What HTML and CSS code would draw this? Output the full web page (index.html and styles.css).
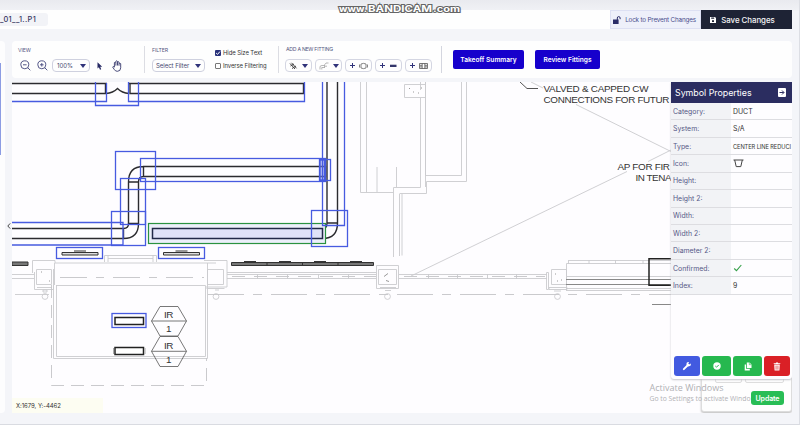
FILE: index.html
```
<!DOCTYPE html>
<html lang="en">
<head>
<meta charset="utf-8">
<title>Takeoff</title>
<link rel="stylesheet" href="styles.css">
</head>
<body>
<div class="app">
  <svg class="recorder" width="130" height="16" viewBox="335 0 130 16">
    <text x="339" y="11.500" textLength="28" lengthAdjust="spacingAndGlyphs" font-size="8.500">www.</text>
    <text x="368" y="11.500" textLength="64" lengthAdjust="spacingAndGlyphs" font-size="9.500">BANDICAM</text>
    <text x="433" y="11.500" textLength="27" lengthAdjust="spacingAndGlyphs" font-size="8.500">.com</text>
  </svg>
  <header class="topbar">
    <div class="file-tab">_01__1..P1</div>
    <button class="lock">
      <svg width="8" height="8" viewBox="0 0 8 8"><path d="M4.300 4V2a1.400 1.400 0 0 1 2.800 0v1.200" fill="none" stroke="#2b2d68"/><path d="M0 3.500h5.600V8H0z" fill="#2b2d68"/></svg>
      <span>Lock to Prevent Changes</span>
    </button>
    <button class="save">
      <svg width="6" height="6" viewBox="0 0 6 6"><path d="M0 0h5l1 1v5H0z" fill="#fff"/><path d="M1.200.5h3v1.300h-3zM2 3.300h2v1.600H2z" fill="#1e2335"/></svg>
      <span>Save Changes</span>
    </button>
  </header>
  <div class="workspace">
    <aside class="sidebar"><div class="scroll"></div></aside>
    <div class="gutter"><svg width="4" height="6" viewBox="0 0 4 6"><path d="M3.200.4.800 3l2.400 2.600" fill="none" stroke="#333" stroke-width=".9"/></svg></div>
    <main class="main">
      <div class="toolbar">
        <section class="group view">
          <h2>VIEW</h2>
          <div class="row">
            <svg class="zoom-out" width="11" height="11" viewBox="0 0 11 11"><g fill="none" stroke="#41447a" stroke-width=".9"><circle cx="4.800" cy="4.800" r="4"/><path d="M7.700 7.700 10.300 10.300M3 4.800h3.600"/></g></svg>
            <svg class="zoom-in" width="11" height="11" viewBox="0 0 11 11"><g fill="none" stroke="#41447a" stroke-width=".9"><circle cx="4.800" cy="4.800" r="4"/><path d="M7.700 7.700 10.300 10.300M3 4.800h3.600M4.800 3v3.600"/></g></svg>
            <div class="select zoom-level"><span>100%</span><i></i></div>
            <svg class="pointer" width="6" height="8" viewBox="0 0 6 8"><path d="M.5.3v6.200l1.400-1.200L3 7.700l1.200-.5-1-2.400h2z" fill="#262963"/></svg>
            <svg class="hand" width="10" height="12" viewBox="0 0 10 12"><path d="M2.400 7V2.600q.8-1.200 1.500 0V1.400q.8-1.300 1.600 0v.7q.8-1 1.500.1v1.200q1.200-.9 1.700.3v4.100Q8.600 11.300 5.400 11.300 3.300 11.300 2.400 9.600L.7 7.200q0-1.400 1.700 0M3.900 2.600v3M5.500 2.100v3.400M7 3.400v2.300" fill="none" stroke="#34376b" stroke-width=".9"/></svg>
          </div>
        </section>
        <section class="group filter">
          <h2>FILTER</h2>
          <div class="row"><div class="select"><span>Select Filter</span><i></i></div></div>
        </section>
        <section class="checks">
          <div class="check"><b class="on"><svg width="6" height="6" viewBox="0 0 6 6"><path d="M1.100 3 2.500 4.400 5 1.500" fill="none" stroke="#fff"/></svg></b><span>Hide Size Text</span></div>
          <div class="check"><b></b><span>Inverse Filtering</span></div>
        </section>
        <section class="group fittings">
          <h2>ADD A NEW FITTING</h2>
          <div class="row">
            <div class="tool"><svg width="9" height="8" viewBox="0 0 9 8"><path d="M1 1.500 6 7M2.500.8 7.500 6.300M1.500 4 5 2M3 6.500 7 4" fill="none" stroke="#444" stroke-width="1"/></svg><i></i></div>
            <div class="tool"><svg width="10" height="8" viewBox="0 0 10 8"><path d="M1 7.500V5Q1 3.500 3 3.500h2.500M2.800 7.500V5.500h2.700M5.500 2.500v3.500M6 2.500l1-1.500h2.500M6 4.200h2" fill="none" stroke="#999" stroke-width=".7"/></svg><i></i></div>
            <div class="tool"><em></em><svg width="9" height="8" viewBox="0 0 9 8"><path d="M2 2q2.500-1.300 5 0v4q-2.500 1.300-5 0zM.5 2.500v3M8.500 2.500v3" fill="none" stroke="#666" stroke-width=".8"/></svg></div>
            <div class="tool"><em></em><svg width="9" height="8" viewBox="0 0 9 8"><path d="M1 2.700h6.500v2.300H1z" fill="#34376b"/></svg></div>
            <div class="tool"><em></em><svg width="9" height="8" viewBox="0 0 9 8"><path d="M.5 1.500h8v5h-8zM3.200 1.500v5M5.800 1.500v5M1 3.300h2M6 3.300h2M1 4.900h2M6 4.900h2" fill="none" stroke="#555" stroke-width=".8"/></svg></div>
          </div>
        </section>
        <button class="primary takeoff">Takeoff Summary</button>
        <button class="primary review">Review Fittings</button>
      </div>

      <div class="canvas">
        <svg class="drawing" width="780" height="331" viewBox="12 82 780 331">
          <g class="arch">
            <path d="M360.500 82V192.500H393.500M366.500 82V192.500M377 167v25M396.500 167V187M402 193.500v62M399.500 194v62M393.500 257V187.500H420.500V98M420.500 90V82M404.500 84.500h21v13h-21zM425.500 82V175.500H461.500V82M466.500 82V181.500H426.500V193.500H399.500"/>
            <path d="M425.500 82V187M531 82l12 6M576 104.500 671 151.500M671 150 648 161.500M627 171.500 411 276"/>
            <path d="M12 274.500H34M12 278.500H34M15 294.500H49M32.500 260.500H55V263H216M32.500 260.500V273M54.500 263V285M53.500 285V358.500H207.500V263M56.500 285V356.500H205.500V285.500H56M104.500 262V255.500H156.500V262M108 255V262M153 255V262M108 258.500h45"/>
            <path d="M36.500 269.500h15v15h-15zM34.500 272v17.500h19V269M37 287.500h15M43 290h4v2h-4zM207.500 269.500h16v15h-16zM204 260.500H227V287H206M206.500 288.500h18M215 290h4M378.500 269.500h18v15h-18zM376.500 265.500h22v23h-22zM380 287.500h16M385 290.500h6"/>
            <circle cx="45" cy="296.500" r="2.900"/><circle cx="216" cy="296.500" r="2.900"/><circle cx="387.500" cy="296.500" r="2.900"/><circle cx="557.500" cy="296.500" r="2.900"/>
            <path d="M227 272.500H376M227 274.500H376M227 278.500H376M399 274.500H547M399 278.500H547M257.500 274v5M287.500 274v5M318.500 274v5M348.500 274v5M428.500 274v5M457.500 274v5M487.500 274v5M516.500 274v5"/>
            <path d="M546.500 272.500h2v17h-2zM551.500 269.500h15v15h-15zM549 287.500h18v2h-18zM566.500 290.500V263.500H671M568.500 260.500H671M568.500 260v4M589 260v4M615.500 260v4M643 260v4M566 290.500H671M566 288.500H671M566 276.500H671M554 291h7"/>
          </g>
          <g class="arch dash">
            <path d="M60 277.500H204" stroke-dasharray="27 9 8 9"/>
            <path d="M232 276.500H376M404 276.500H545" stroke-dasharray="13 9"/>
            <path d="M208 294.500H671" stroke-dasharray="36 9 9 9"/>
            <path d="M51.500 285V385.500H206.500V358" stroke-dasharray="13 7"/>
          </g>
          <path d="M566 279.500H671M566 284.500H671M652 304.500H671" stroke="#888"/>
          <path d="M384 276.500l4-3M386 280.500l3 1M409 88.500h1M413 92h1M421 88h1M418 93h1M555 274h1M561 280h1M557 281h1M41 272h1M49 281h1" stroke="#999"/>
          <path d="M520 82l7 6.500h11" fill="none" stroke="#555"/>
          <g class="duct">
            <path d="M12 83.500H107M12 93.500H105.500V83.500M129 83.500H303.500V93.500H130V83.500M106 93.500Q113 93 117.500 88.500 122 93 129 93.500"/>
            <path d="M143.500 166.500H325.500V176.500H143.500ZM143.500 166.500Q128.500 166.500 128.500 182V223.500H138.500V182Q138.500 176.500 143.500 176.500M128.500 182H138.500"/>
            <path d="M327 82V223H337.500V82M337.500 223Q337.500 238.500 322.500 238.500M327 223Q327 228.500 322.500 228.500M327 163v16"/>
            <path d="M12 228.500H123.500Q128.500 228.500 128.500 223.500M12 238.500H123.500Q138.500 238.500 138.500 223.500M123.500 228.500v10"/>
          </g>
          <rect x="148.500" y="223.500" width="177" height="20" fill="#eceffa" stroke="#2a9240" stroke-width="1.200"/>
          <rect x="152.500" y="228.500" width="170" height="10" fill="#e0e2f8" stroke="#222948" stroke-width="1.500"/>
          <g class="vents">
            <path d="M62 252.500H98V255H62zM163.500 252.500H199.500V255H163.500z" fill="#ddd"/>
            <path d="M74 251H86M175.500 251H187.500"/>
            <path d="M12 262h16v3.500H12zM231.500 262.500H373.500V265.500H231.500z" fill="#777"/><path d="M267 262v4M302.500 262v4M338 262v4M244 261.500h12M279 261.500h12M314 261.500h12M350 261.500h12"/>
          </g>
          <g class="sel">
            <path d="M12 101.500H106.500V83M95.500 82V105.500H138.500V82M128.500 82V101.500H304.500V82"/>
            <rect x="115.500" y="151.500" width="40" height="38"/><rect x="140.500" y="158.500" width="185" height="23"/>
            <rect x="319.500" y="159.500" width="11" height="21"/><rect x="320" y="160" width="4.500" height="20" fill="#7785e2" fill-opacity=".5"/>
            <path d="M322.500 82V225.500H344.500V82"/><rect x="120.500" y="178.500" width="25" height="46"/>
            <rect x="111.500" y="211.500" width="34" height="34"/><path d="M12 222.500H123V245H12"/>
            <rect x="311.500" y="210.500" width="36" height="36"/>
            <rect x="56.500" y="247.500" width="46" height="11"/><rect x="158.500" y="247.500" width="46" height="11"/>
            <rect x="112" y="313.500" width="34" height="14"/>
          </g>
          <g fill="#fff" stroke="#222" stroke-width="1.500"><rect x="115" y="317.500" width="28.500" height="7"/><rect x="115" y="347.500" width="28.500" height="7"/><path d="M672 258.700H649V285.300H672" fill="none"/></g>
          <path d="M113.500 348v6M145 348v6" stroke="#aaa"/>
          <g fill="none" stroke="#555" stroke-width=".8"><path d="M151.500 321 160 306.500H178L186.500 321 178 336H160ZM151.500 321H186.500M151.500 351.300 160 336.500H178L186.500 351.300 178 366.500H160ZM151.500 351.300H186.500"/></g>
          <g class="notes">
            <text x="164" y="318" textLength="9.500">IR</text><text x="166" y="332">1</text><text x="164" y="348.500" textLength="9.500">IR</text><text x="166" y="362.500">1</text>
            <text x="543.500" y="91.800" textLength="105">VALVED &amp; CAPPED CW</text>
            <text x="543.500" y="102.500" textLength="126">CONNECTIONS FOR FUTUR</text>
            <text x="617.500" y="169.700" textLength="52.500">AP FOR FIR</text>
            <text x="635.500" y="180.500" textLength="36">IN TENA</text>
          </g>
        </svg>
        <div class="coords">X:1679, Y:-4462</div>
        <div class="update-card"><span class="field a"></span><span class="field b"></span><button>Update</button></div>
        <svg class="watermark" width="110" height="26" viewBox="648 380 110 26">
          <text x="649.500" y="390.500" font-size="9" textLength="74">Activate Windows</text>
          <text x="649.500" y="400.700" font-size="6.800" textLength="101">Go to Settings to activate Windo</text>
        </svg>
        <div class="panel">
          <div class="panel-head"><span>Symbol Properties</span><svg width="8" height="9" viewBox="0 0 8 9"><rect width="8" height="9" rx="1" fill="#fff"/><path d="M1.500 4.500h4.300M4 2.500l2 2-2 2" fill="none" stroke="#2b2d60"/></svg></div>
          <dl>
            <dt>Category:</dt><dd>DUCT</dd>
            <dt>System:</dt><dd>S/A</dd>
            <dt>Type:</dt><dd class="small">CENTER LINE REDUCI</dd>
            <dt>Icon:</dt><dd><svg width="11" height="9" viewBox="0 0 11 9"><path d="M.5 1h10M1.700 1 3.200 7.600H7.800L9.300 1" fill="none" stroke="#444"/></svg></dd>
            <dt>Height:</dt><dd></dd>
            <dt>Height 2:</dt><dd></dd>
            <dt>Width:</dt><dd></dd>
            <dt>Width 2:</dt><dd></dd>
            <dt>Diameter 2:</dt><dd></dd>
            <dt>Confirmed:</dt><dd><svg width="10" height="8" viewBox="0 0 10 8"><path d="M1.200 4.500 3.500 6.700 8.300 1" fill="none" stroke="#36a04a" stroke-width="1.100"/></svg></dd>
            <dt>Index:</dt><dd>9</dd>
          </dl>
          <div class="actions">
            <button class="blue"><svg width="10" height="10" viewBox="0 0 10 10"><path d="M1.800 8.200 6 4" stroke="#fff" stroke-width="1.900" stroke-linecap="round"/><path d="M8.700 2.500A2.200 2.200 0 1 1 7 1L6.300 2.800l.8.800z" fill="#fff"/></svg></button>
            <button class="green"><svg width="8" height="8" viewBox="0 0 8 8"><circle cx="4" cy="4" r="3.700" fill="#fff"/><path d="M2.300 4 3.500 5.200 5.800 2.900" fill="none" stroke="#26b84f"/></svg></button>
            <button class="green"><svg width="8" height="9" viewBox="0 0 8 9"><path d="M2.800.5h2.700l2 2V6H2.800zM.7 2.500H2v4.300h3.800v1.700H.7z" fill="#fff"/><path d="M5.300.5v2.200h2" fill="none" stroke="#26b84f" stroke-width=".6"/></svg></button>
            <button class="red"><svg width="8" height="9" viewBox="0 0 8 9"><path d="M.7 1.200h2L3.100.5h1.800l.4.700h2V2H.7zM1.200 2.600h5.600l-.4 5.900H1.600z" fill="#fff"/><path d="M2.900 3.600v4M4 3.600v4M5.100 3.600v4" stroke="#da2026" stroke-width=".5"/></svg></button>
          </div>
        </div>
      </div>
    </main>
  </div>
</div>
</body>
</html>
```
FILE: styles.css
```
* { box-sizing: border-box; }
body { margin: 0; width: 800px; height: 425px; overflow: hidden; background: #f4f5f9; font-family: Inter, "Liberation Sans", sans-serif; color: #34366b; }
button { border: 0; margin: 0; padding: 0; font-family: inherit; display: flex; align-items: center; justify-content: center; }
svg { display: block; flex: none; }
.app { position: relative; height: 425px; padding-top: 10px; background: linear-gradient(#e9eaef, #f0f1f5 10px, #f4f5f9 11px); border-right: 1px solid #dcdee4; border-bottom: 1px solid #d9dbe1; }
.recorder { position: absolute; left: 335px; top: 0; font-family: Inter, sans-serif; font-weight: 700; fill: #fff; stroke: #666; stroke-width: 2px; paint-order: stroke; z-index: 2; }

.topbar { display: flex; align-items: stretch; height: 19px; width: 792px; background: #fefefe; }
.file-tab { align-self: center; width: 48px; height: 13px; line-height: 13px; margin-right: auto; background: #f2f3f7; border-radius: 0 3px 3px 0; font-size: 7.4px; font-weight: 500; letter-spacing: .38px; white-space: nowrap; color: #34345e; }
.lock { width: 91px; background: #eef0fa; border: 1px solid #dde0f3; gap: 4px; padding-right: 2px; font-size: 6.3px; letter-spacing: -.17px; color: #494c8c; white-space: nowrap; }
.save { width: 91px; background: #1e2335; color: #f4f4f6; gap: 5px; padding-right: 8px; font-size: 7.9px; font-weight: 500; letter-spacing: -.05px; }

.workspace { display: flex; margin-top: 12px; height: 372px; }
.sidebar { width: 5px; height: 372px; background: #fdfdfe; border-radius: 0 4px 4px 0; padding-top: 22px; }
.scroll { width: 1px; height: 92px; background: #8c9ce3; }
.gutter { width: 7px; padding: 182px 0 0 2px; }
.main { width: 780px; }

.toolbar { display: flex; height: 37px; background: #fefefe; border-radius: 4px; margin-bottom: 4px; padding: 5px 0 0 6px; }
h2 { margin: 0; height: 7px; line-height: 9px; font-size: 5.2px; font-weight: 400; letter-spacing: -.12px; color: #55587f; white-space: nowrap; }
.group { height: 27px; }
.row { display: flex; align-items: center; height: 13px; margin-top: 6px; color: #45476f; }
.view { width: 127px; border-right: 1px solid #dcdde3; }
.zoom-out { margin: 0 6px 0 2px; }
.zoom-in { margin-right: 4px; }
.pointer { margin: 0 9px 0 7px; }
.select { display: flex; align-items: center; justify-content: space-between; height: 13px; border: 1px solid #cfd1df; border-radius: 4px; padding: 0 3px; font-size: 6px; letter-spacing: -.03px; white-space: nowrap; }
.zoom-level { width: 38px; padding-left: 4px; }
i { border: 3px solid transparent; border-top: 4px solid #30337a; border-bottom: 0; }
.filter { width: 63px; padding-left: 7px; }
.filter .select { width: 53px; }
.checks { width: 71px; height: 27px; padding: 3px 0 0 7px; border-right: 1px solid #dcdde3; }
.check { display: flex; align-items: center; gap: 2px; height: 7px; margin-bottom: 6px; font-size: 5.9px; letter-spacing: -.06px; color: #333; white-space: nowrap; }
.check b { width: 6px; height: 6px; border: 1px solid #777; border-radius: 1px; }
.check b.on { border: 0; background: #28307a; }
.fittings { width: 163px; padding-left: 7px; border-right: 1px solid #d4d6df; }
.fittings h2 { position: relative; top: -1px; letter-spacing: -.28px; }
.fittings .row { gap: 3px; margin-left: -1px; }
.tool { flex: none; display: flex; align-items: center; justify-content: center; gap: 4px; width: 27px; height: 13px; border: 1px solid #d4d6e2; border-radius: 4px; }
em { width: 5px; height: 5px; background: linear-gradient(#30337a, #30337a) center / 5px 1px no-repeat, linear-gradient(#30337a, #30337a) center / 1px 5px no-repeat; }
.primary { height: 19px; margin-top: 4px; border-radius: 2px; background: #1600cc; color: #fff; font-size: 6.6px; font-weight: 600; letter-spacing: 0; white-space: nowrap; }
.takeoff { width: 71px; margin-left: 11px; }
.review { width: 65px; margin-left: 11px; }

.canvas { position: relative; width: 780px; height: 331px; background: #fefdff; overflow: hidden; }
.arch { fill: none; stroke: #cbcbce; stroke-width: .9; }
.dash { stroke: #c4c4c7; }
.duct { fill: none; stroke: #2b2b2f; stroke-width: 1.4; }
.vents { fill: none; stroke: #333; stroke-width: 1; }
.sel { fill: none; stroke: #475be0; stroke-width: 1.3; }
.notes { font-family: "Liberation Sans", Arial, sans-serif; font-size: 9.9px; fill: #333; }
.coords { position: absolute; left: 0; bottom: 0; width: 91px; height: 15px; line-height: 15px; padding-left: 4px; background: #fdfdf2; font-size: 6px; letter-spacing: -.05px; color: #333; }
.update-card { position: absolute; left: 689px; top: 288px; width: 91px; height: 42px; border-radius: 3px; background: #fefefe; border: 1px solid #ddd; box-shadow: 0 1px 2px #bbb; }
.update-card button { position: absolute; left: 49px; top: 20px; width: 33px; height: 14px; border-radius: 3px; background: #28bd55; color: #fff; font-size: 7px; font-weight: 600; letter-spacing: -.1px; }
.field { position: absolute; top: 0; height: 12px; border: 1px solid #ddd; border-radius: 2px; }
.field.a { left: 13px; width: 27px; }
.field.b { left: 43px; width: 39px; }
.watermark { position: absolute; left: 636px; top: 298px; font-family: "Open Sans", "Noto Sans", sans-serif; fill: #b1b1b5; }

.panel { position: absolute; left: 659px; top: 0; width: 121px; height: 297px; background: #fefdff; border-radius: 0 0 3px 3px; box-shadow: 0 1px 2px #c4c4ca; display: flex; flex-direction: column; }
.panel-head { display: flex; align-items: center; justify-content: space-between; height: 21px; padding: 0 6px 0 4px; background: #2b2d60; color: #fff; font-size: 8.9px; letter-spacing: -.03px; white-space: nowrap; }
dl { display: grid; grid-template-columns: 60px 61px; grid-auto-rows: 17.43px; margin: 0; font-size: 6.9px; }
dt, dd { display: flex; align-items: center; margin: 0; padding-left: 2px; border-bottom: 1px solid #dddde1; white-space: nowrap; overflow: hidden; }
dt { background: #f2f3f6; color: #565986; }
dd { color: #333; }
dd.small { font-size: 5.7px; letter-spacing: -.08px; }
.actions { display: flex; gap: 2px; margin-top: auto; padding: 0 2px 3px 3px; }
.actions button { height: 20px; width: 29px; border-radius: 3px; }
.actions .blue { width: 26px; background: #425ae0; }
.actions .green { background: #26b84f; }
.actions .red { width: 26px; background: #da2026; }
```
